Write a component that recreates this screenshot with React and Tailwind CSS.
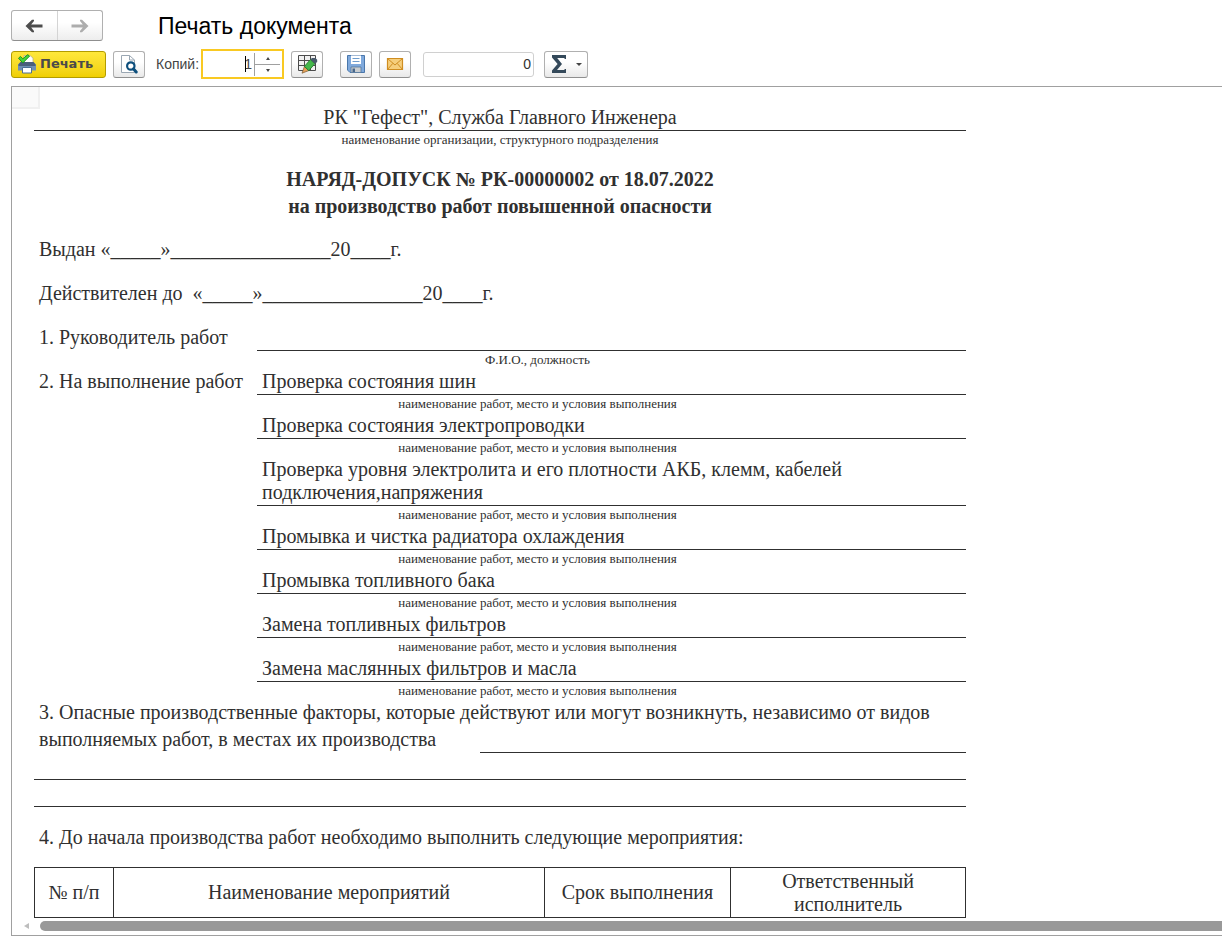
import React, { useState } from 'react';

const works = [
  'Проверка состояния шин',
  'Проверка состояния электропроводки',
  'Проверка уровня электролита и его плотности АКБ, клемм, кабелей подключения,напряжения',
  'Промывка и чистка радиатора охлаждения',
  'Промывка топливного бака',
  'Замена топливных фильтров',
  'Замена маслянных фильтров и масла',
];

const toolButton =
  'flex h-[27px] w-8 items-center justify-center rounded-[3px] border border-[#b0b0b0] border-b-[#8f8f8f] bg-linear-to-b from-white from-40% to-[#e9e9e9]';

function ArrowIcon({ flip, color }) {
  return (
    <svg width="18" height="14" viewBox="0 0 18 14" className={flip ? '-scale-x-100' : ''}>
      <path d="M0.5 7 L7 0.8 H9 V2 L6.2 5.4 H17.5 V8.6 H6.2 L9 12 V13.2 H7 Z" fill={color} />
    </svg>
  );
}

function PrinterIcon() {
  return (
    <svg width="20" height="20" viewBox="0 0 20 20">
      <path d="M7 1.5 H13 L16 4 V10 H7 Z" fill="#fff" stroke="#b9b08a" strokeWidth="0.8" />
      <path d="M3.5 8 H16.5 L19 10.5 V16.5 H1 V10.5 Z" fill="#6f8fb3" />
      <path d="M3.5 8 H16.5 L18.5 10.5 V12 H1.5 V10.5 Z" fill="#4a5f7c" />
      <path d="M5.5 13.5 H14.5 V19 H5.5 Z" fill="#fff" stroke="#4d6f94" />
      <path d="M1.5 4.2 L3.5 2.4 L5.8 4.8 L10.8 0.6 L12.5 2.2 L5.8 9 Z" fill="#46d63a" stroke="#168a1a" strokeWidth="0.9" />
    </svg>
  );
}

function PreviewIcon() {
  return (
    <svg width="18" height="20" viewBox="0 0 18 20">
      <path d="M1.5 1.5 H9.5 L14.5 6 V18.5 H1.5 Z" fill="#fff" stroke="#9aa7b3" />
      <path d="M9.5 1.5 V6 H14.5" fill="none" stroke="#9aa7b3" />
      <circle cx="10.8" cy="12" r="3.7" fill="#fff" stroke="#0d4f7d" strokeWidth="2.2" />
      <path d="M13.4 14.8 L16.2 18" stroke="#0d4f7d" strokeWidth="3" strokeLinecap="round" />
    </svg>
  );
}

function EditTableIcon() {
  return (
    <svg width="22" height="20" viewBox="0 0 22 20">
      <path d="M2.5 1.5 H19.5 V16.5 H2.5 Z" fill="#f1f1f1" />
      <path d="M2.5 1.5 H19.5 V16.5 H2.5 Z M2.5 6.5 H19.5 M2.5 11.5 H19.5 M8.5 1.5 V16.5 M14.5 1.5 V16.5" fill="none" stroke="#4c4c4c" />
      <path d="M6 19.2 L8.4 12.6 L12.8 16.6 Z" fill="#e6a159" stroke="#7a5c35" strokeWidth="0.7" />
      <path d="M8.4 12.4 L14.4 5.6 L18.8 9.8 L12.8 16.6 Z" fill="#45b84b" stroke="#22782a" strokeWidth="0.9" />
      <path d="M14.4 5.6 L16 4 H19.4 L21.2 5.8 V8 L18.8 9.8 Z" fill="#4a5a6c" />
    </svg>
  );
}

function SaveIcon() {
  return (
    <svg width="20" height="20" viewBox="0 0 20 20">
      <path d="M1.5 1.5 H18.5 V18.5 H4 L1.5 16 Z" fill="#7fa9dc" stroke="#4a77ab" />
      <path d="M5 1.5 H15 V10 H5 Z" fill="#fff" />
      <path d="M6.5 4.5 H13.5 M6.5 7.5 H13.5" stroke="#6f9ccc" />
      <path d="M5 13 H15 V18.5 H5 Z" fill="#c9cdd0" stroke="#56779b" strokeWidth="0.8" />
      <path d="M6.5 14.5 H9 V18 H6.5 Z" fill="#48678a" />
    </svg>
  );
}

function MailIcon() {
  return (
    <svg width="18" height="14" viewBox="0 0 18 14">
      <path d="M1.5 1.5 H16.5 V12.5 H1.5 Z" fill="#f6cf7c" stroke="#cf8d20" strokeWidth="1.2" />
      <path d="M1.5 1.5 L9 8 L16.5 1.5 M1.5 12.5 L6.8 6.4 M16.5 12.5 L11.2 6.4" fill="none" stroke="#cf8d20" />
    </svg>
  );
}

function SumIcon() {
  return (
    <svg width="16" height="18" viewBox="0 0 16 18">
      <path d="M1 0 H15 V4 H14 L13 3 H6.2 L11 9 L6 15 H13 L14 14 H15 V18 H1 V15.6 L6.6 9 L1 2.4 Z" fill="#34495a" />
    </svg>
  );
}

function Hint({ children }) {
  return <p className="h-[17px] text-center text-[13px] leading-[17px]">{children}</p>;
}

export default function App() {
  const [copies, setCopies] = useState(1);

  return (
    <div className="overflow-hidden bg-white pb-2 pl-[11px] pt-[10px] font-['Liberation_Sans',Arial,sans-serif] text-[#444]">
      <header className="flex items-center">
        <div className="flex h-[31px] w-[92px] rounded-[3px] border border-[#b0b0b0] border-b-[#8f8f8f] bg-linear-to-b from-white from-40% to-[#ededed]">
          <button aria-label="Назад" className="flex flex-1 items-center justify-center border-r border-[#d4d4d4]">
            <ArrowIcon color="#4d4d4d" />
          </button>
          <button aria-label="Вперед" className="flex flex-1 items-center justify-center">
            <ArrowIcon flip color="#adadad" />
          </button>
        </div>
        <h1 className="ml-[55px] text-[23px] leading-7 text-black">Печать документа</h1>
      </header>

      <div className="mt-2 flex h-[30px] items-center text-sm">
        <button className="flex h-[27px] w-[95px] items-center gap-[3px] rounded-[3px] border border-[#b29c00] bg-linear-to-b from-[#ffe83a] to-[#f0cf00] pl-[5px] font-['DejaVu_Sans',Verdana,sans-serif] text-[13px] font-bold text-[#4a4a4a]">
          <PrinterIcon />
          Печать
        </button>
        <button aria-label="Предварительный просмотр" className={`${toolButton} ml-[7px]`}>
          <PreviewIcon />
        </button>
        <label htmlFor="copies" className="ml-[11px] w-[45px] text-sm">
          Копий:
        </label>
        <div className="relative flex h-[30px] w-[83px] items-center border-2 border-[#f9c922] pr-[2px]">
          <input
            id="copies"
            type="text"
            value={copies}
            onChange={(e) => setCopies(Number(e.target.value) || 1)}
            className="min-w-0 flex-1 pr-[2px] text-right text-sm outline-none"
          />
          <span className="absolute left-[42px] top-[5px] h-4 w-px bg-black" />
          <div className="flex h-[23px] w-[26px] flex-col border-l border-[#a0a0a0]">
            <button
              aria-label="Больше"
              onClick={() => setCopies(copies + 1)}
              className="flex h-3 items-center justify-center border-b border-[#a0a0a0]"
            >
              <svg width="4" height="3" viewBox="0 0 4 3"><path d="M0 3 L2 0 L4 3 Z" fill="#444" /></svg>
            </button>
            <button
              aria-label="Меньше"
              onClick={() => setCopies(Math.max(1, copies - 1))}
              className="flex h-[11px] items-center justify-center"
            >
              <svg width="4" height="3" viewBox="0 0 4 3"><path d="M0 0 L2 3 L4 0 Z" fill="#444" /></svg>
            </button>
          </div>
        </div>
        <button aria-label="Редактировать" className={`${toolButton} ml-[7px]`}>
          <EditTableIcon />
        </button>
        <button aria-label="Сохранить" className={`${toolButton} ml-[17px]`}>
          <SaveIcon />
        </button>
        <button aria-label="Отправить" className={`${toolButton} ml-[7px]`}>
          <MailIcon />
        </button>
        <input
          aria-label="Сумма"
          type="text"
          readOnly
          value="0"
          className="ml-3 h-[25px] w-[111px] rounded-[3px] border border-[#d0d0d0] pr-[2px] text-right text-sm text-[#303030] outline-none"
        />
        <button
          aria-label="Выбор функции"
          className="ml-[10px] flex h-[27px] w-11 items-center justify-between rounded-[3px] border border-[#b0b0b0] border-b-[#8f8f8f] bg-linear-to-b from-white from-40% to-[#e9e9e9] pl-[6px] pr-[5px]"
        >
          <SumIcon />
          <svg width="6" height="3" viewBox="0 0 6 3"><path d="M0 0 H6 L3 3 Z" fill="#444" /></svg>
        </button>
      </div>

      <main className="mt-[7px] border-y border-l border-[#a0a0a0]">
        <div className="h-[22px] w-7 border-b-2 border-r-2 border-[#f0f0f0] bg-[#fafafa]" />

        <article className="ml-[22px] -mt-[5px] max-w-[932px] font-['Liberation_Serif','Times_New_Roman',serif] text-xl leading-[23px] text-[#303030]">
          <p className="border-b border-[#303030] pb-px pt-[2px] text-center">РК "Гефест", Служба Главного Инженера</p>
          <Hint>наименование организации, структурного подразделения</Hint>

          <h2 className="mt-[18px] text-center font-bold leading-[27px]">
            НАРЯД-ДОПУСК № РК-00000002 от 18.07.2022
            <br />
            на производство работ повышенной опасности
          </h2>

          <p className="mt-4 py-[2px] pl-[5px]">Выдан «_____»________________20____г.</p>
          <p className="mt-[17px] whitespace-pre py-[2px] pl-[5px]">Действителен до  «_____»________________20____г.</p>

          <section className="mt-[17px] flex">
            <h3 className="w-[223px] shrink-0 py-[2px] pl-[5px]">1. Руководитель работ</h3>
            <div className="flex-1">
              <div className="h-[27px] border-b border-[#303030]" />
              <div className="max-w-[561px]"><Hint>Ф.И.О., должность</Hint></div>
            </div>
          </section>

          <section className="flex">
            <h3 className="w-[223px] shrink-0 py-[2px] pl-[5px]">2. На выполнение работ</h3>
            <ul className="flex-1">
              {works.map((work) => (
                <li key={work}>
                  <p className="border-b border-[#303030] pb-px pl-[5px] pr-20 pt-[2px]">{work}</p>
                  <div className="max-w-[561px]"><Hint>наименование работ, место и условия выполнения</Hint></div>
                </li>
              ))}
            </ul>
          </section>

          <section>
            <p className="py-[2px] pl-[5px]">3. Опасные производственные факторы, которые действуют или могут возникнуть, независимо от видов</p>
            <div className="flex h-[27px]">
              <p className="w-[446px] shrink-0 py-[2px] pl-[5px]">выполняемых работ, в местах их производства</p>
              <div className="flex-1 border-b border-[#303030]" />
            </div>
            <div className="h-[27px] border-b border-[#303030]" />
            <div className="h-[27px] border-b border-[#303030]" />
          </section>

          <p className="mt-[17px] py-[2px] pl-[5px]">4. До начала производства работ необходимо выполнить следующие мероприятия:</p>

          <table className="mt-4 w-full table-fixed border-collapse text-center [&_th]:border [&_th]:border-[#303030] [&_th]:p-px [&_th]:font-normal">
            <thead>
              <tr className="h-[50px]">
                <th className="w-[79px]">№ п/п</th>
                <th>Наименование мероприятий</th>
                <th className="w-[186px]">Срок выполнения</th>
                <th className="w-[235px]">
                  Ответственный
                  <br />
                  исполнитель
                </th>
              </tr>
            </thead>
          </table>
        </article>

        <div className="mb-1 mt-[3px] flex h-[10px] items-center pl-3">
          <svg width="5" height="6" viewBox="0 0 5 6"><path d="M5 0 V6 L0 3 Z" fill="#bdbdbd" /></svg>
          <div className="ml-[11px] h-[10px] flex-1 rounded-l-full bg-[#999]" />
        </div>
      </main>
    </div>
  );
}
